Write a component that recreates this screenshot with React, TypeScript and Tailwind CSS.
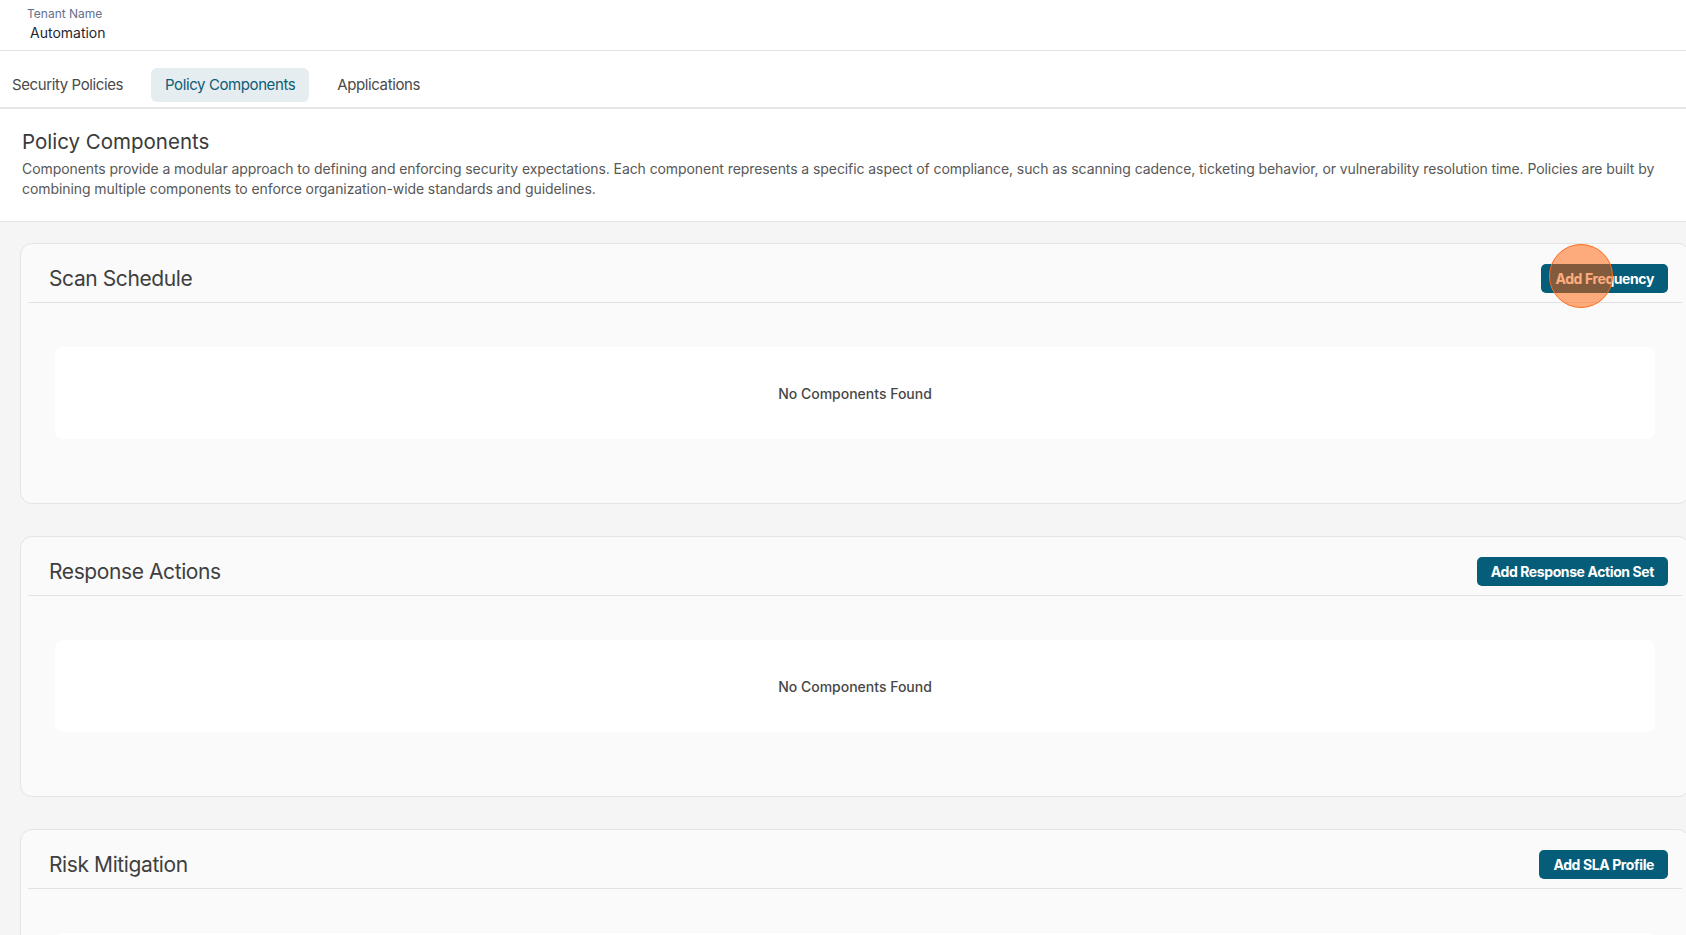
import React from 'react';

const tabs = ['Security Policies', 'Policy Components', 'Applications'];

const sections = [
  { title: 'Scan Schedule', action: 'Add Frequency', highlight: true },
  { title: 'Response Actions', action: 'Add Response Action Set' },
  { title: 'Risk Mitigation', action: 'Add SLA Profile' },
];

const ComponentCard = ({ title, action, highlight = false }: { title: string; action: string; highlight?: boolean }) => (
  <div className="w-[1670px] shrink-0 rounded-xl border border-[#e4e4e4] bg-[#fafafa]">
    <div className="mx-[7px] flex items-center justify-between border-b border-[#e2e2e2] pt-[20px] pb-[9px] pl-[21px] pr-[14px]">
      <h2 className="text-[21px] leading-[29px] tracking-[-0.4px] text-[#3f3f3f]">{title}</h2>
      <div className="relative">
        <button className="h-[29px] rounded-[5px] bg-[#055d7a] px-[14px] text-[14px] font-bold tracking-[-0.4px] text-white">
          {action}
        </button>
        {highlight && (
          <span className="pointer-events-none absolute left-[8px] top-[-20px] h-[64px] w-[64px] rounded-full border border-[#ff6a1a] bg-[#ff5a00]/50" />
        )}
      </div>
    </div>
    <div className="px-[34px] pt-[44px] pb-[64px]">
      <div className="flex h-[92px] items-center justify-center rounded-lg bg-white text-[14px] font-medium text-[#474747]">
        No Components Found
      </div>
    </div>
  </div>
);

export default function App() {
  return (
    <div className="min-h-screen overflow-hidden bg-[#f5f5f5] font-['Inter',sans-serif]">
      {/* tenant header */}
      <div className="h-[51px] border-b border-[#e3e3e3] bg-white pl-[27px] pt-[6px]">
        <div className="text-[12px] leading-[16px] text-[#66718c]">Tenant Name</div>
        <div className="mt-[1px] pl-[3px] text-[14px] leading-[20px] text-[#1f2633]">Automation</div>
      </div>

      {/* tabs */}
      <div className="flex h-[58px] items-start gap-[16px] border-b-2 border-[#e6e6e6] bg-white pt-[17px]">
        {tabs.map((t) => (
          <div
            key={t}
            className={
              t === 'Policy Components'
                ? 'flex h-[34px] items-center rounded-md bg-[#e6edf0] px-[14px] text-[15px] tracking-[-0.4px] text-[#0c5c76]'
                : 'flex h-[34px] items-center px-3 text-[15px] tracking-[-0.4px] text-[#4a4a4a]'
            }
          >
            {t}
          </div>
        ))}
      </div>

      {/* page intro */}
      <div className="border-b border-[#e3e3e3] bg-white pl-[22px] pr-[12px] pt-[20px] pb-[22px]">
        <h1 className="text-[20.5px] leading-[26px] text-[#3a3a3a]">Policy Components</h1>
        <p className="mt-[4px] text-[14px] leading-[20px] tracking-[-0.08px] text-[#585858]">
          Components provide a modular approach to defining and enforcing security expectations. Each component represents a specific aspect of compliance, such as scanning cadence, ticketing behavior, or vulnerability resolution time. Policies are built by combining multiple components to enforce organization-wide standards and guidelines.
        </p>
      </div>

      {/* cards */}
      <div className="flex flex-col gap-[32px] pl-[20px] pt-[21px] pb-10">
        {sections.map((s) => (
          <ComponentCard key={s.title} {...s} />
        ))}
      </div>
    </div>
  );
}
